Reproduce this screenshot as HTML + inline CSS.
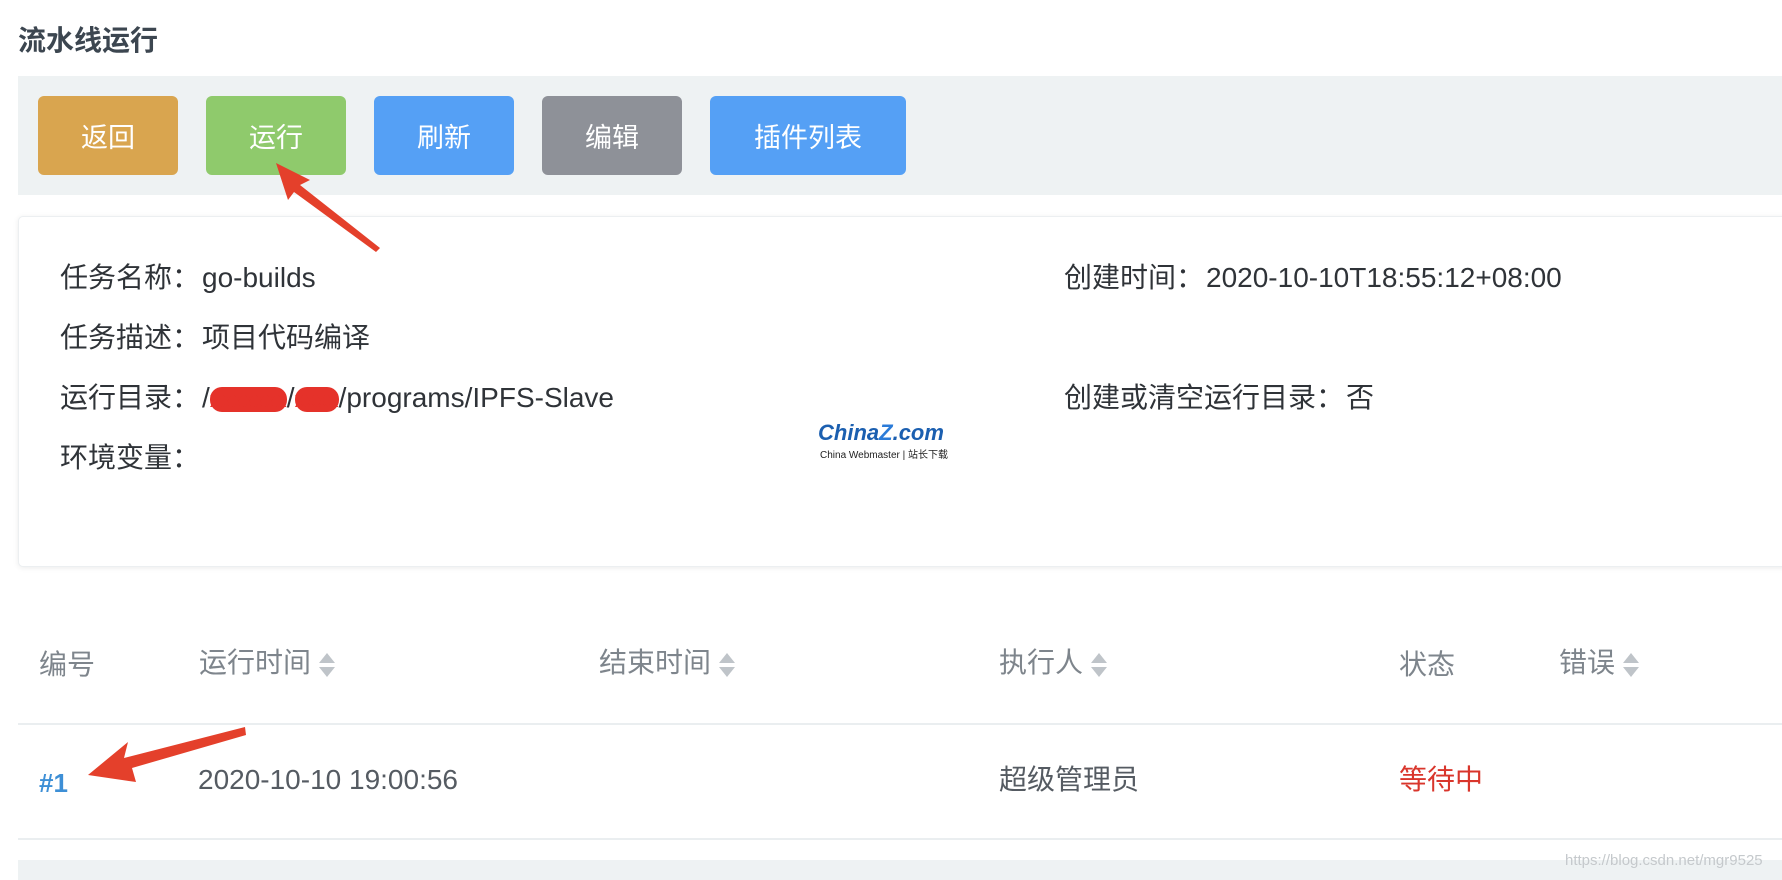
<!DOCTYPE html>
<html><head><meta charset="utf-8"><style>
body{margin:0;width:1782px;height:880px;background:#fff;position:relative;overflow:hidden;font-family:"Liberation Sans","Noto Sans CJK SC",sans-serif;color:#3a3f45}
.a{position:absolute;white-space:nowrap}
.btn{position:absolute;top:96px;height:79px;border-radius:6px;color:#fff;font-size:27px;display:flex;align-items:center;justify-content:center}
.t{font-size:28px;color:#2f3338;line-height:30px}
.h{font-size:28px;color:#7e858c;line-height:30px}
.s{display:inline-block;vertical-align:middle;margin-left:8px;width:16px;height:26px;position:relative}
.s:before,.s:after{content:"";position:absolute;left:0;border-left:8px solid transparent;border-right:8px solid transparent}
.s:before{top:1px;border-bottom:10px solid #bfc4c9}
.s:after{bottom:1px;border-top:10px solid #bfc4c9}
</style></head><body>
<div class="a" style="left:18px;top:19px;font-size:28px;font-weight:bold;color:#3c4650">流水线运行</div>
<div class="a" style="left:18px;top:76px;right:0;height:119px;background:#eef2f3"></div>
<div class="btn" style="left:38px;width:140px;background:#d9a54f">返回</div>
<div class="btn" style="left:206px;width:140px;background:#8fca6c">运行</div>
<div class="btn" style="left:374px;width:140px;background:#55a0f5">刷新</div>
<div class="btn" style="left:542px;width:140px;background:#8e9198">编辑</div>
<div class="btn" style="left:710px;width:196px;background:#55a0f5">插件列表</div>
<div class="a" style="left:18px;top:216px;right:-10px;height:349px;background:#fff;border:1px solid #eceff1;border-radius:5px;box-shadow:0 1px 6px rgba(0,0,0,.08)"></div>
<div class="a t" style="left:60px;top:263px">任务名称：<span style="margin-left:2px">go-builds</span></div>
<div class="a t" style="left:60px;top:323px">任务描述：<span style="margin-left:2px">项目代码编译</span></div>
<div class="a t" style="left:60px;top:383px">运行目录：<span style="margin-left:2px">/<span style="color:#e5322a;background:#e5322a;border-radius:12px;font-size:22px">xxxxxxx</span>/<span style="color:#e5322a;background:#e5322a;border-radius:12px;font-size:22px">xxxx</span>/programs/IPFS-Slave</span></div>
<div class="a t" style="left:60px;top:443px">环境变量：</div>
<div class="a t" style="left:1064px;top:263px">创建时间：<span style="margin-left:2px">2020-10-10T18:55:12+08:00</span></div>
<div class="a t" style="left:1064px;top:383px">创建或清空运行目录：<span style="margin-left:2px">否</span></div>
<div class="a" style="left:818px;top:420px;font-size:22px;font-weight:bold;font-style:italic;color:#1b5fb0">China<span style="color:#2b7bd8">Z</span>.com</div>
<div class="a" style="left:820px;top:446px;font-size:10px;color:#222">China Webmaster | 站长下载</div>
<div class="a h" style="left:39px;top:650px">编号</div>
<div class="a h" style="left:199px;top:648px">运行时间<span class="s"></span></div>
<div class="a h" style="left:599px;top:648px">结束时间<span class="s"></span></div>
<div class="a h" style="left:999px;top:648px">执行人<span class="s"></span></div>
<div class="a h" style="left:1399px;top:650px">状态</div>
<div class="a h" style="left:1559px;top:648px">错误<span class="s"></span></div>
<div class="a" style="left:18px;right:0;top:723px;height:2px;background:#eaeef0"></div>
<div class="a t" style="left:39px;top:768px;color:#3d8fd6;font-weight:bold;font-size:26px">#1</div>
<div class="a t" style="left:198px;top:765px;color:#555b62">2020-10-10 19:00:56</div>
<div class="a t" style="left:999px;top:765px;color:#555b62">超级管理员</div>
<div class="a t" style="left:1399px;top:765px;color:#d9362c">等待中</div>
<div class="a" style="left:18px;right:0;top:838px;height:2px;background:#eaeef0"></div>
<div class="a" style="left:18px;right:0;top:860px;height:20px;background:#eef2f3"></div>
<div class="a" style="left:1565px;top:852px;font-size:15px;color:#c5c9cc">https://blog.csdn.net/mgr9525</div>
<svg class="a" style="left:0;top:0" width="1782" height="880">
<polygon points="276,163 310,180 300,185 380,248 376,252 294,192 288,200" fill="#e4402b"/>
<polygon points="88,775 128,742 124,758 245,727 246,735 132,768 136,782" fill="#e4402b"/>
</svg>
</body></html>
